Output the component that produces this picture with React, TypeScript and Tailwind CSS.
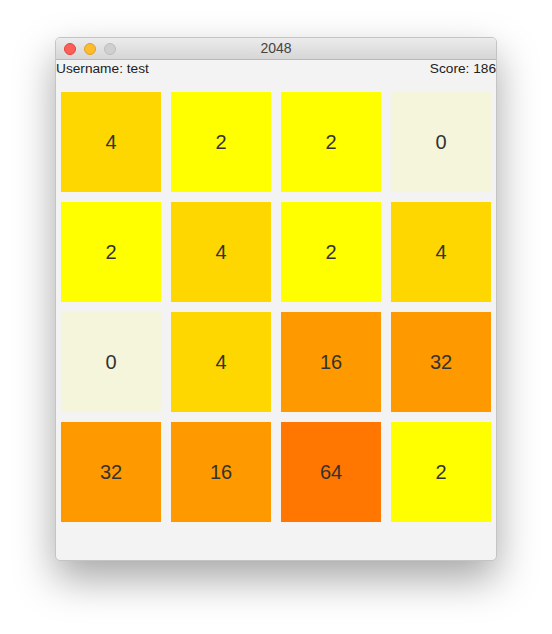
import React from 'react';

const board: number[][] = [
  [4, 2, 2, 0],
  [2, 4, 2, 4],
  [0, 4, 16, 32],
  [32, 16, 64, 2],
];

const tileBg: Record<number, string> = {
  0: 'bg-[#f5f5dc]',
  2: 'bg-[#ffff00]',
  4: 'bg-[#ffd700]',
  16: 'bg-[#ff9900]',
  32: 'bg-[#ff9900]',
  64: 'bg-[#ff7700]',
};

export default function App() {
  return (
    <div className="w-[552px] h-[634px] bg-white pt-[37px] pl-[55px] font-['Liberation_Sans',Arial,sans-serif]">
      <div className="w-[442px] h-[524px] rounded-[5px] border border-[#c4c4c4] bg-[#f3f3f3] overflow-hidden shadow-[0_18px_40px_rgba(0,0,0,0.35)] flex flex-col">
        {/* Titelleiste */}
        <div className="relative h-[22px] bg-gradient-to-b from-[#ececec] to-[#d6d6d6] border-b border-[#b8b8b8] flex items-center justify-center shrink-0">
          <div className="absolute left-[8px] top-[5px] flex gap-[8px]">
            <span className="w-[12px] h-[12px] rounded-full bg-[#fc5f57] border border-[#e0443e]" />
            <span className="w-[12px] h-[12px] rounded-full bg-[#fdbc2e] border border-[#dea123]" />
            <span className="w-[12px] h-[12px] rounded-full bg-[#cfcfcf] border border-[#bdbdbd]" />
          </div>
          <span className="text-[14px] text-[#444]">2048</span>
        </div>
        <div className="flex justify-between text-[13.7px] leading-[16px] text-[#222] pt-[1px] whitespace-nowrap">
          <span>Username: test</span>
          <span>Score: 186</span>
        </div>
        <div className="grid grid-cols-[repeat(4,100px)] gap-[10px] pl-[5px] pt-[15px]">
          {board.flat().map((v, i) => (
            <div
              key={i}
              className={`w-[100px] h-[100px] flex items-center justify-center text-[20px] text-[#333] ${tileBg[v]}`}
            >
              {v}
            </div>
          ))}
        </div>
      </div>
    </div>
  );
}
